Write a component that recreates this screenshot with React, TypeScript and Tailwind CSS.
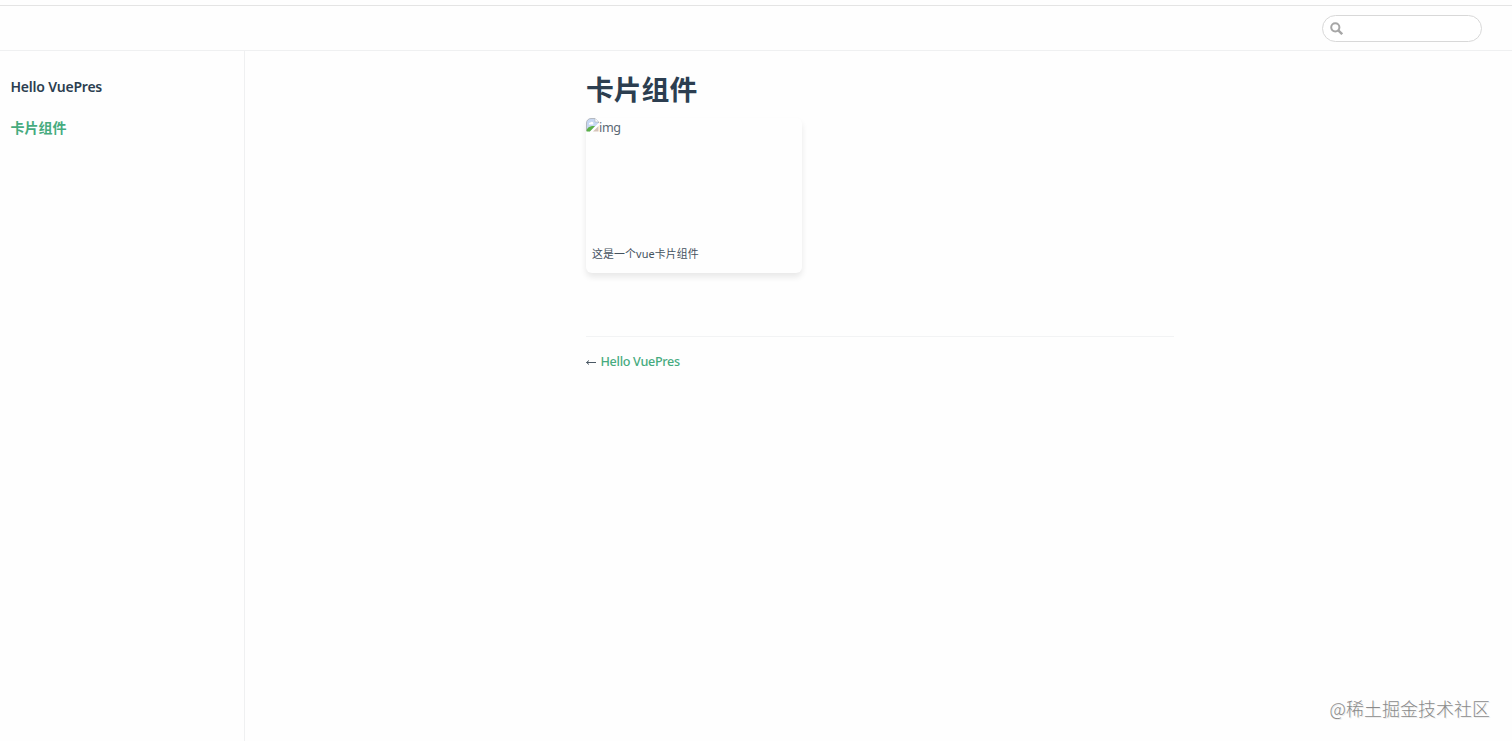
const sidebar = [
  { text: "Hello VuePres", active: false },
  { text: "卡片组件", active: true },
];

const SearchIcon = () => (
  <svg width="13" height="13" viewBox="0 0 13 13" fill="none" stroke="#a6a6a6">
    <circle cx="5.3" cy="5.3" r="4.1" strokeWidth="2" />
    <path d="M8.3 8.3L12.2 12.2" strokeWidth="2.4" />
  </svg>
);

const BrokenImage = () => (
  <svg width="13" height="14" viewBox="0 0 13 14">
    <path d="M0.5 13V5a4.5 4.5 0 0 1 4.5-4.5h4L12.5 4v1L4.5 13.5z" fill="#c6d7f2" />
    <path d="M0.5 13V5a4.5 4.5 0 0 1 4.5-4.5h4L12.5 4v1" fill="none" stroke="#b4b9c0" />
    <path d="M9 0.5V4h3.5" fill="#fff" stroke="#b3b8bf" strokeWidth="0.7" />
    <path d="M3 6.5a1.5 1.5 0 0 1 1.5-2a1.5 1.5 0 0 1 2.8 0.5v1.5z" fill="#fff" />
    <path d="M0.5 13.5c0-3.5 3-6 8.5-5.5L4 13.5z" fill="#5bb147" />
    <path d="M4.5 14L12.5 6.5" stroke="#fff" strokeWidth="1.3" />
    <path d="M7 13.5L12.5 8v5.5z" fill="#d5c4ba" />
  </svg>
);

const App = () => {
  return (
    <div className="relative flex h-[741px] w-full flex-col overflow-hidden bg-[#fefefe] font-['Noto_Sans','Noto_Sans_CJK_SC',sans-serif] text-[#2c3e50]">
      <header className="mt-[5px] flex h-[46px] shrink-0 items-center justify-end border-y border-[#eff0f1] border-t-[#e4e4e4] pr-[30px]">
        <div className="flex h-[27px] w-[160px] items-center rounded-full border border-[#d8d8d8] bg-white pl-[7px]">
          <SearchIcon />
        </div>
      </header>
      <div className="flex flex-1">
        <aside className="w-[245px] shrink-0 border-r border-[#eff0f1] pl-[10.5px] pt-[25px]">
          {sidebar.map((item) => (
            <p
              key={item.text}
              className={
                item.active
                  ? "mt-[19px] text-[14px] font-bold leading-[22px] text-[#46ab7e]"
                  : "text-[14px] font-semibold leading-[22px] tracking-[-0.21px]"
              }
            >
              {item.text}
            </p>
          ))}
        </aside>
        <main className="ml-[341px] w-[588px]">
          <h1 className="mt-[20px] text-[27.8px] font-bold leading-[36px]">
            卡片组件
          </h1>
          <div className="mt-[11px] flex h-[155px] w-[216px] flex-col rounded-[6px] shadow-[0_4px_6px_rgba(0,0,0,0.09)]">
            <div className="flex h-[125px] items-start">
              <BrokenImage />
              <span className="mt-px text-[12.6px] leading-[18px] tracking-[-0.35px] text-[#5a6874]">
                img
              </span>
            </div>
            <p className="pl-[6px] text-[10.9px] leading-[22px] tracking-[0.12px] text-[#45525e]">
              这是一个vue卡片组件
            </p>
          </div>
          <div className="mt-[63px] flex items-center border-t border-[#f2f3f4] pt-[14px] text-[12.6px] leading-[22px]">
            <svg width="11" height="9" viewBox="0 0 11 9" fill="none" stroke="#4b5864">
              <path d="M0.5 4.5H10M3 2.5L0.5 4.5L3 6.5" />
            </svg>
            <span className="ml-[3.5px] font-medium tracking-[-0.3px] text-[#46ab7e]">
              Hello VuePres
            </span>
          </div>
        </main>
      </div>
      <span className="absolute bottom-[20px] right-[22px] font-['Noto_Sans_CJK_SC',sans-serif] text-[18px] font-light leading-[26px] text-[#8a8a8a] [text-shadow:1px_1px_0_#ececec]">
        @稀土掘金技术社区
      </span>
    </div>
  );
};

export default App;
